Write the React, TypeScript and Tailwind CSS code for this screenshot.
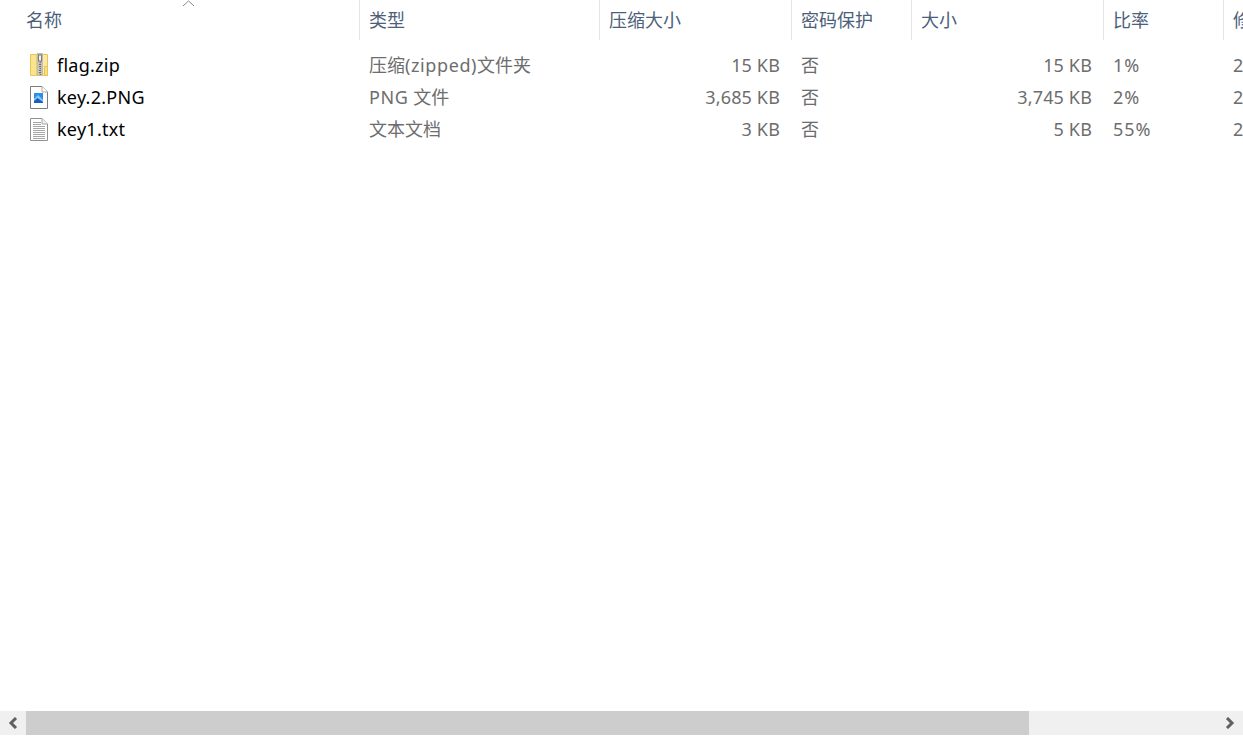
const font = "font-['Noto_Sans','Noto_Sans_CJK_SC',sans-serif]"

const ZipIcon = () => (
  <svg width="20" height="24" viewBox="0 0 20 24" className="shrink-0">
    <path d="M1.5 1.5H8V22.5H1.5Z" fill="#fbe38f" stroke="#e9c552" />
    <path d="M8 1.5H18.5V22.5H8Z" fill="#fce9a4" stroke="#e9c552" />
    <path d="M15.5 13.5H18.5V22.5H15.5Z" fill="#fbdf85" stroke="#e9c552" />
    <rect x="8" y="0" width="6" height="22.5" fill="#bdbdbd" />
    <rect x="9.5" y="2" width="3" height="6" fill="#f2f2f2" stroke="#7a7a7a" />
    <path d="M11 9V22" stroke="#6f6f6f" strokeWidth="2" strokeDasharray="1 1" />
    <path d="M10 9V22" stroke="#efe3a8" strokeWidth="1" strokeDasharray="1 2" />
  </svg>
)

const PngIcon = () => (
  <svg width="20" height="24" viewBox="0 0 20 24" className="shrink-0">
    <path d="M1.5 1.5H13L18.5 7V23.5H1.5Z" fill="#fff" stroke="#7c7c7c" />
    <path d="M13 1.5V7H18.5" fill="#fff" stroke="#a8a8a8" />
    <rect x="5" y="8" width="9" height="10" fill="#2b8fe8" />
    <path d="M5 18V14L9 10L14 15V18Z" fill="#8cc4f4" />
    <path d="M5 18V16L8.5 13L14 17V18Z" fill="#1560c4" />
  </svg>
)

const TxtIcon = () => (
  <svg width="20" height="24" viewBox="0 0 20 24" className="shrink-0">
    <path d="M1.5 1.5H13L18.5 7V23.5H1.5Z" fill="#fff" stroke="#929292" />
    <path d="M13 1.5V7H18.5" fill="#f0f0f0" stroke="#a8a8a8" />
    {[5, 7, 9, 11, 13, 15, 17, 19, 21].map((y) => (
      <path
        key={y}
        d={y < 8 ? `M4 ${y + 0.5}H12` : `M4 ${y + 0.5}H16`}
        stroke="#a6a6a6"
      />
    ))}
  </svg>
)

const Chevron = ({ dir }: { dir: 'left' | 'right' }) => (
  <svg width="10" height="12" viewBox="0 0 10 12">
    <path
      d={dir === 'left' ? 'M8 1L3 6L8 11' : 'M2 1L7 6L2 11'}
      fill="none"
      stroke="#606060"
      strokeWidth="3"
    />
  </svg>
)

const rows = [
  {
    name: 'flag.zip',
    icon: <ZipIcon />,
    type: (
      <>
        压缩<span className="tracking-[0.6px]">(zipped)</span>文件夹
      </>
    ),
    packed: '15 KB',
    size: '15 KB',
    ratio: '1%',
  },
  {
    name: 'key.2.PNG',
    icon: <PngIcon />,
    type: (
      <>
        <span className="tracking-[0.6px]">PNG</span> 文件
      </>
    ),
    packed: '3,685 KB',
    size: '3,745 KB',
    ratio: '2%',
  },
  {
    name: 'key1.txt',
    icon: <TxtIcon />,
    type: '文本文档',
    packed: '3 KB',
    size: '5 KB',
    ratio: '55%',
  },
]

const headerCell = 'flex shrink-0 items-center border-r border-[#e5e5e5] pl-[9px]'

export default function App() {
  return (
    <div
      className={`${font} relative flex h-[736px] w-[1243px] flex-col overflow-hidden bg-white text-[18px] whitespace-nowrap`}
    >
      {/* sort caret sits over the name column header */}
      <svg
        width="13"
        height="7"
        viewBox="0 0 13 7"
        className="absolute top-0 left-[182px]"
      >
        <path d="M1 6L6.5 1L12 6" fill="none" stroke="#8a8a8a" />
      </svg>

      <div className="flex h-10 text-[#4c607a]">
        <div className={`${headerCell} w-[360px] pl-[26px]`}>名称</div>
        <div className={`${headerCell} w-[240px]`}>类型</div>
        <div className={`${headerCell} w-[192px]`}>压缩大小</div>
        <div className={`${headerCell} w-[120px]`}>密码保护</div>
        <div className={`${headerCell} w-[192px]`}>大小</div>
        <div className={`${headerCell} w-[120px]`}>比率</div>
        <div className="flex flex-1 items-center pl-[9px]">修</div>
      </div>

      <div className="flex flex-1 flex-col pt-[9px] text-[#6d6d6d]">
        {rows.map((row) => (
          <div key={row.name} className="flex h-8 items-center">
            <div className="flex w-[360px] shrink-0 items-center gap-2 pl-[29px] tracking-[0.25px] text-black">
              {row.icon}
              {row.name}
            </div>
            <div className="w-[240px] shrink-0 pl-[9px]">{row.type}</div>
            <div className="w-[192px] shrink-0 pr-3 text-right tracking-[0.15px]">
              {row.packed}
            </div>
            <div className="w-[120px] shrink-0 pl-[9px]">否</div>
            <div className="w-[192px] shrink-0 pr-3 text-right tracking-[0.15px]">
              {row.size}
            </div>
            <div className="w-[120px] shrink-0 pl-[9px] tracking-[1px]">
              {row.ratio}
            </div>
            <div className="flex-1 pl-[9px]">2</div>
          </div>
        ))}
      </div>

      <div className="mb-px flex h-6 items-stretch bg-[#f0f0f0]">
        <div className="flex w-[26px] items-center justify-center">
          <Chevron dir="left" />
        </div>
        <div className="w-[1003px] bg-[#cdcdcd]" />
        <div className="flex flex-1 items-center justify-end pr-2">
          <Chevron dir="right" />
        </div>
      </div>
    </div>
  )
}
